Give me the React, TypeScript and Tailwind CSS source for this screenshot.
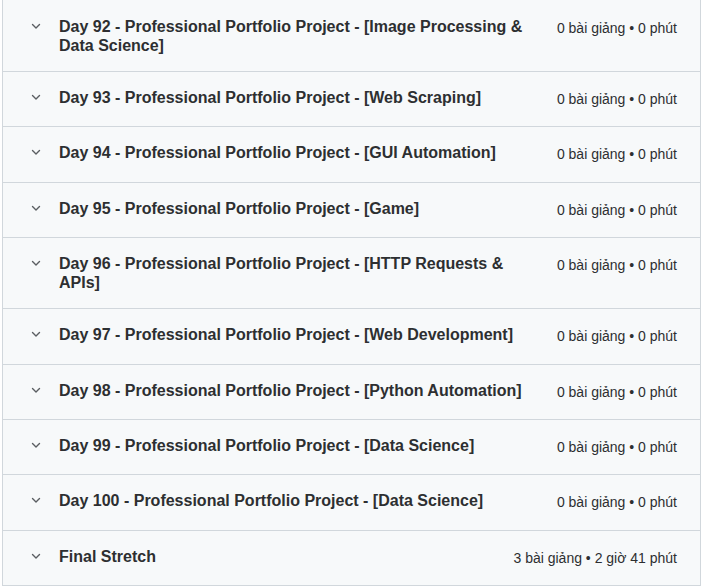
const sections = [
  { title: 'Day 92 - Professional Portfolio Project - [Image Processing & Data Science]', meta: '0 bài giảng • 0 phút' },
  { title: 'Day 93 - Professional Portfolio Project - [Web Scraping]', meta: '0 bài giảng • 0 phút' },
  { title: 'Day 94 - Professional Portfolio Project - [GUI Automation]', meta: '0 bài giảng • 0 phút' },
  { title: 'Day 95 - Professional Portfolio Project - [Game]', meta: '0 bài giảng • 0 phút' },
  { title: 'Day 96 - Professional Portfolio Project - [HTTP Requests & APIs]', meta: '0 bài giảng • 0 phút' },
  { title: 'Day 97 - Professional Portfolio Project - [Web Development]', meta: '0 bài giảng • 0 phút' },
  { title: 'Day 98 - Professional Portfolio Project - [Python Automation]', meta: '0 bài giảng • 0 phút' },
  { title: 'Day 99 - Professional Portfolio Project - [Data Science]', meta: '0 bài giảng • 0 phút' },
  { title: 'Day 100 - Professional Portfolio Project - [Data Science]', meta: '0 bài giảng • 0 phút' },
  { title: 'Final Stretch', meta: '3 bài giảng • 2 giờ 41 phút' },
];

function Chevron() {
  return (
    <svg width="16" height="16" viewBox="0 0 16 16" fill="none" className="text-[#5a5e62]">
      <path d="M4.5 6.5l3.5 3.5 3.5-3.5" stroke="currentColor" strokeWidth="1.4" strokeLinecap="round" strokeLinejoin="round" />
    </svg>
  );
}

export default function App() {
  return (
    <div className="min-h-[588px] bg-white font-['Liberation_Sans',Arial,sans-serif]">
      <div className="ml-[2px] w-[699px] border-x border-b border-[#d1d7dc] bg-[#f7f9fa]">
        {sections.map((s) => (
          <div
            key={s.title}
            className="flex items-start gap-[15px] border-t border-[#d1d7dc] py-4 pl-[25px] pr-[23px] first:border-t-0 first:pt-[17px]"
          >
            {/* chevron */}
            <div className="flex h-[22.4px] w-4 shrink-0 pt-[1px]">
              <Chevron />
            </div>
            <div className="flex-1 pr-[16px] text-base font-bold leading-[19px] text-[#2d2f31]">
              {s.title}
            </div>
            <div className="shrink-0 mt-px text-sm leading-[20px] text-[#2d2f31]">{s.meta}</div>
          </div>
        ))}
      </div>
    </div>
  );
}
